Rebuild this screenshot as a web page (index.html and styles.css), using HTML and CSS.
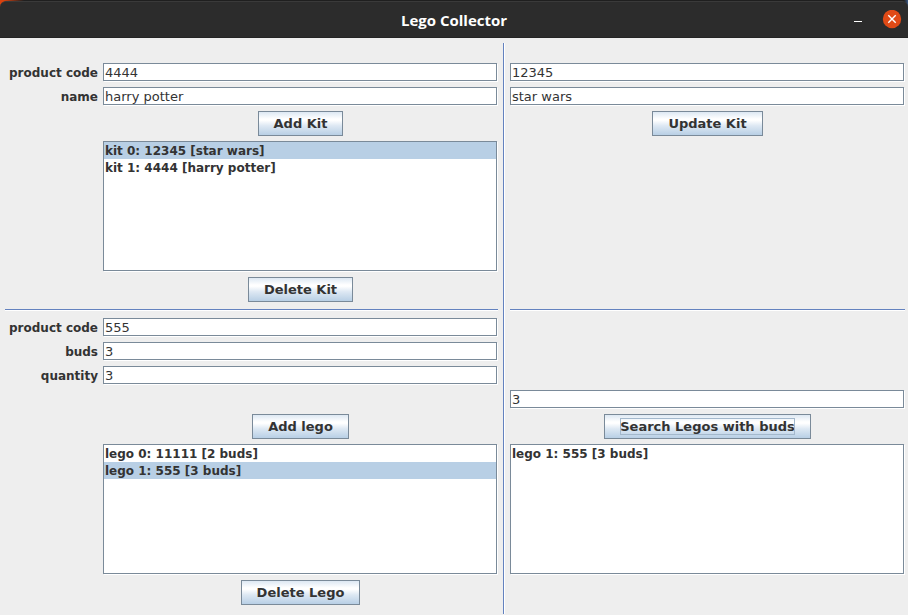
FILE: index.html
```html
<!DOCTYPE html>
<html lang="en">
<head>
<meta charset="utf-8">
<title>Lego Collector</title>
<link rel="stylesheet" href="styles.css">
</head>
<body>
<div class="window">
  <div class="frame">
    <header class="titlebar">
      <h1 class="title">Lego Collector</h1>
      <div class="controls">
        <button class="control" type="button" aria-label="Minimize">
          <svg width="20" height="20" viewBox="0 0 20 20"><path d="M6 11.5h8" stroke="#fff" stroke-width="1"/></svg>
        </button>
        <button class="control" type="button" aria-label="Close">
          <svg width="20" height="20" viewBox="0 0 20 20"><circle cx="10" cy="9" r="9.2" fill="#e04a16"/><path d="M6.3 5.3l7.4 7.4M13.7 5.3l-7.4 7.4" stroke="#fff" stroke-width="1.4"/></svg>
        </button>
      </div>
    </header>
  </div>
  <main class="form">
    <div class="divider"></div>

    <label class="label row-code" for="kit-code">product code</label>
    <input class="field left row-code" id="kit-code" type="text" value="4444">
    <input class="field right row-code" type="text" value="12345" aria-label="selected kit product code">

    <label class="label row-name" for="kit-name">name</label>
    <input class="field left row-name" id="kit-name" type="text" value="harry potter">
    <input class="field right row-name" type="text" value="star wars" aria-label="selected kit name">

    <button class="button left row-add-kit" type="button">Add Kit</button>
    <button class="button right row-add-kit" type="button">Update Kit</button>

    <ul class="list left row-kits" role="listbox" aria-label="kits">
      <li class="item selected" role="option" aria-selected="true">kit 0: 12345 [star wars]</li>
      <li class="item" role="option" aria-selected="false">kit 1: 4444 [harry potter]</li>
    </ul>
    <button class="button left row-delete-kit" type="button">Delete Kit</button>

    <hr class="rule rule-left">
    <hr class="rule rule-right">

    <label class="label row-lego-code" for="lego-code">product code</label>
    <input class="field left row-lego-code" id="lego-code" type="text" value="555">

    <label class="label row-buds" for="lego-buds">buds</label>
    <input class="field left row-buds" id="lego-buds" type="text" value="3">

    <label class="label row-quantity" for="lego-quantity">quantity</label>
    <input class="field left row-quantity" id="lego-quantity" type="text" value="3">

    <input class="field right row-search" type="text" value="3" aria-label="buds to search">

    <button class="button left row-add-lego" type="button">Add lego</button>
    <button class="button right row-add-lego" type="button"><span class="focused">Search Legos with buds</span></button>

    <ul class="list left row-legos" role="listbox" aria-label="legos">
      <li class="item" role="option" aria-selected="false">lego 0: 11111 [2 buds]</li>
      <li class="item selected" role="option" aria-selected="true">lego 1: 555 [3 buds]</li>
    </ul>
    <ul class="list right row-legos" role="listbox" aria-label="search results">
      <li class="item" role="option" aria-selected="false">lego 1: 555 [3 buds]</li>
    </ul>
    <button class="button left row-delete-lego" type="button">Delete Lego</button>
  </main>
</div>
</body>
</html>
```
FILE: styles.css
```css
* { box-sizing: border-box; }

body {
  margin: 0;
  background: #eeeeee;
  color: #333333;
  font: bold 12px/16px "DejaVu Sans", sans-serif;
}

.window {
  min-height: 100vh;
  display: flex;
  flex-direction: column;
}

.frame {
  background: linear-gradient(to right, #d9420f 0, #d9420f 4px, #1f1f1f 24px, #1f1f1f calc(100% - 4px), #3c5a86 100%);
  padding-top: 1px;
}

.titlebar {
  display: grid;
  grid-template-columns: 1fr auto 1fr;
  align-items: center;
  height: 37px;
  padding: 0 6px;
  background: #2c2c2c;
  border-top: 1px solid #3a3a3a;
  border-bottom: 1px solid #242424;
  border-radius: 6px 6px 0 0;
}

.title {
  grid-column: 2;
  margin: 0;
  color: #ffffff;
  font: bold 15px/20px "Open Sans", sans-serif;
}

.controls {
  display: flex;
  justify-content: flex-end;
  gap: 14px;
}

.control {
  width: 20px;
  height: 20px;
  padding: 0;
  border: 0;
  background: none;
}

.control svg { display: block; }

.form {
  flex: 1;
  display: grid;
  grid-template-columns: 93px 1fr 2px 1fr;
  grid-template-rows: 15px 19px 19px 25px 131px 25px 6px 19px 19px 19px 19px 25px 131px 25px;
  gap: 5px;
  padding: 5px 3px 1px 5px;
}

.label {
  grid-column: 1;
  justify-self: end;
  align-self: center;
  white-space: nowrap;
}

.left { grid-column: 2; }
.right { grid-column: 4; }

.row-code { grid-row: 2; }
.row-name { grid-row: 3; }
.row-add-kit { grid-row: 4; }
.row-kits { grid-row: 5; }
.row-delete-kit { grid-row: 6; }
.row-lego-code { grid-row: 8; }
.row-buds { grid-row: 9; }
.row-quantity { grid-row: 10; }
.row-search { grid-row: 11; }
.row-add-lego { grid-row: 12; }
.row-legos { grid-row: 13; }
.row-delete-lego { grid-row: 14; }

.field,
.list {
  margin: 0 1px 1px 0;
  border: 1px solid #7a8a99;
  border-radius: 0;
  background: #ffffff;
  box-shadow: 1px 1px 0 #ffffff;
}

.field {
  min-width: 0;
  padding: 1px 1px 0;
  color: #333333;
  font: 13px/15px "DejaVu Sans", sans-serif;
  outline: 0;
}

.list {
  padding: 0;
  list-style: none;
  overflow: hidden;
}

.item { padding: 1px 1px 0; }
.selected { background: #b8cfe5; }

.button {
  justify-self: center;
  padding: 0 15px;
  border: 1px solid #7a8a99;
  border-radius: 0;
  background: linear-gradient(#dde8f3 0, #ffffff 30%, #ffffff 36%, #dde8f3 60%, #b8cfe5 100%);
  color: #333333;
  font: bold 13px/17px "DejaVu Sans", sans-serif;
}

.focused {
  display: block;
  outline: 1px solid #a3b8cc;
  outline-offset: -1px;
}

.rule {
  grid-row: 7;
  align-self: center;
  width: 100%;
  height: 2px;
  margin: 0;
  border: 0;
  border-top: 1px solid #6382bf;
  background: #ffffff;
}

.rule-left { grid-column: 1 / 3; }
.rule-right { grid-column: 4; }

.divider {
  grid-column: 3;
  grid-row: 1 / 16;
  border-left: 1px solid #6382bf;
  background: #ffffff;
}
```
